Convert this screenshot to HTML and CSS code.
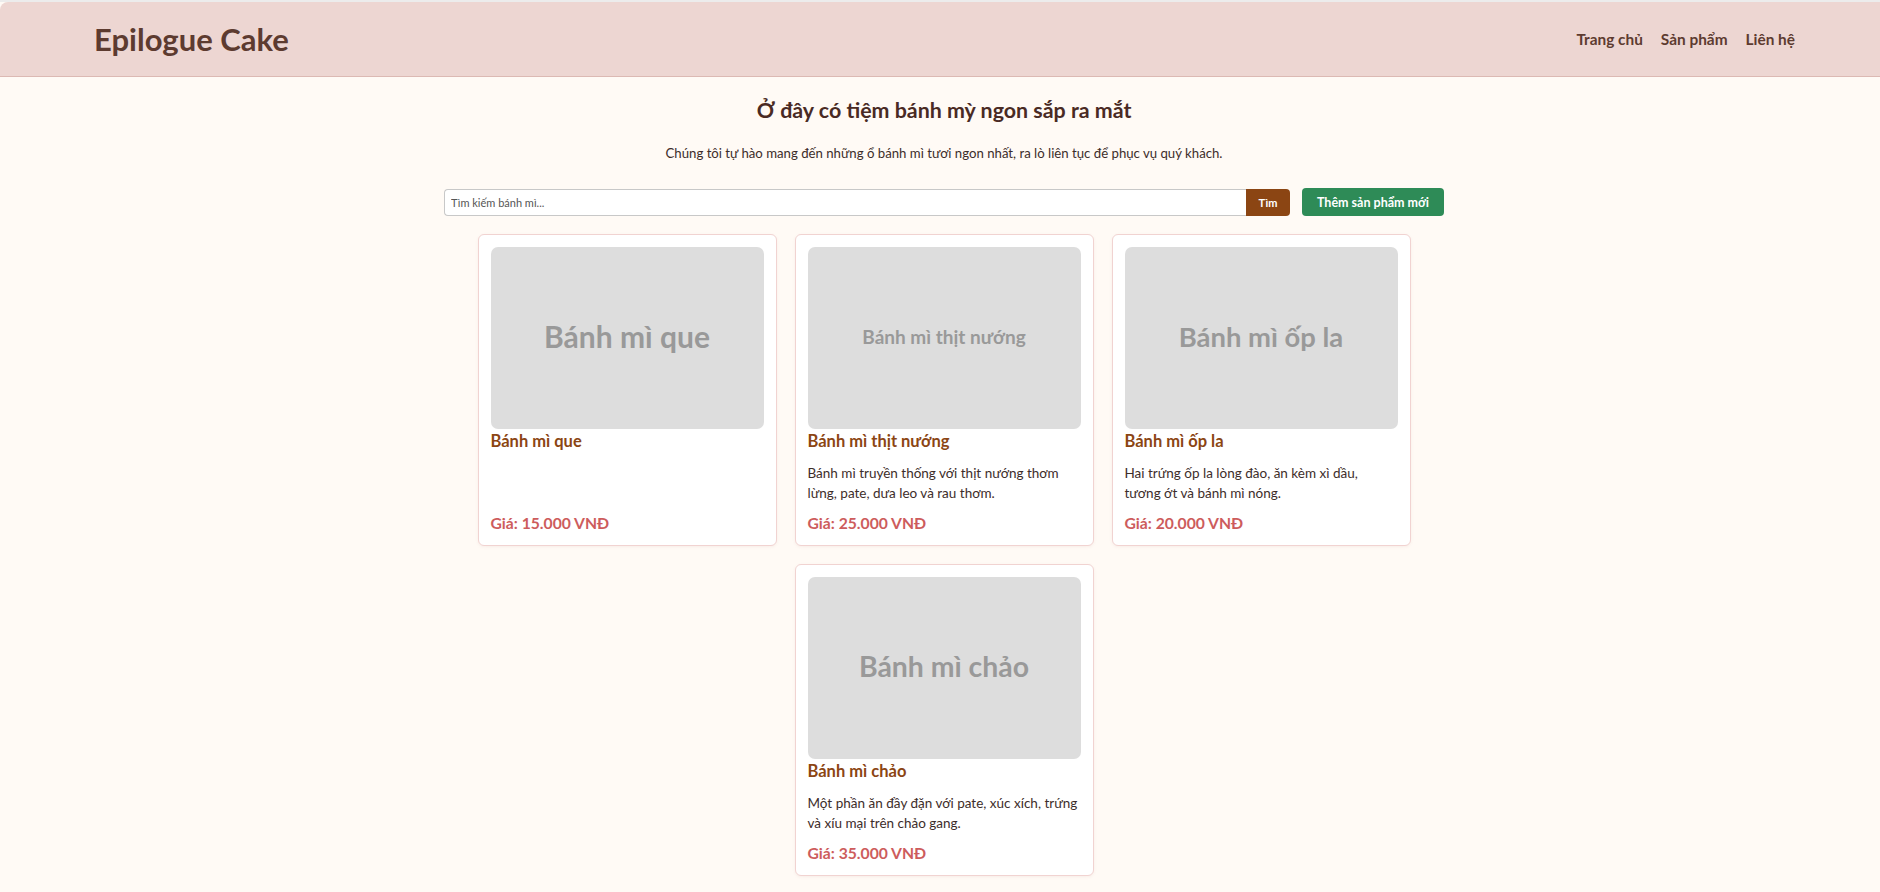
FILE: index.html
```html
<!DOCTYPE html>
<html lang="vi">
<head>
<meta charset="utf-8">
<title>Epilogue Cake</title>
<link rel="stylesheet" href="styles.css">
</head>
<body>
<header class="site-header">
  <div class="logo">Epilogue Cake</div>
  <nav class="nav">
    <a href="#">Trang chủ</a>
    <a href="#">Sản phẩm</a>
    <a href="#">Liên hệ</a>
  </nav>
</header>
<main class="main">
  <h1 class="headline">Ở đây có tiệm bánh mỳ ngon sắp ra mắt</h1>
  <p class="lead">Chúng tôi tự hào mang đến những ổ bánh mì tươi ngon nhất, ra lò liên tục để phục vụ quý khách.</p>
  <div class="toolbar">
    <div class="search">
      <input class="search-input" type="text" placeholder="Tìm kiếm bánh mì...">
      <button class="search-btn">Tìm</button>
    </div>
    <button class="add-btn">Thêm sản phẩm mới</button>
  </div>
  <div class="products">
    <div class="card">
      <div class="thumb thumb-xl">Bánh mì que</div>
      <h3 class="card-title">Bánh mì que</h3>
      <p class="price">Giá: 15.000 VNĐ</p>
    </div>
    <div class="card">
      <div class="thumb thumb-sm">Bánh mì thịt nướng</div>
      <h3 class="card-title">Bánh mì thịt nướng</h3>
      <p class="desc">Bánh mì truyền thống với thịt nướng thơm lừng, pate, dưa leo và rau thơm.</p>
      <p class="price">Giá: 25.000 VNĐ</p>
    </div>
    <div class="card">
      <div class="thumb thumb-md">Bánh mì ốp la</div>
      <h3 class="card-title">Bánh mì ốp la</h3>
      <p class="desc">Hai trứng ốp la lòng đào, ăn kèm xì dầu, tương&nbsp;ớt và bánh mì nóng.</p>
      <p class="price">Giá: 20.000 VNĐ</p>
    </div>
    <div class="card">
      <div class="thumb thumb-lg">Bánh mì chảo</div>
      <h3 class="card-title">Bánh mì chảo</h3>
      <p class="desc">Một phần ăn đầy đặn với pate, xúc xích, trứng và xíu mại trên chảo gang.</p>
      <p class="price">Giá: 35.000 VNĐ</p>
    </div>
  </div>
</main>
</body>
</html>
```

FILE: styles.css
```css
* { box-sizing: border-box; }

html, body {
  margin: 0;
  padding: 0;
}

body {
  background: #fffaf5;
  border-top: 2px solid #ececec;
  font-family: Lato, "Noto Sans", sans-serif;
  color: #3a2a28;
}

.site-header {
  height: 75px;
  background: #edd6d2;
  border-bottom: 1px solid #dcb9b3;
  border-top-left-radius: 8px;
  display: flex;
  align-items: center;
  justify-content: space-between;
  padding: 0 85px 0 94px;
}

.logo {
  font-size: 31px;
  font-weight: 700;
  color: #5d3b30;
}

.nav {
  display: flex;
  gap: 18px;
}

.nav a {
  font-size: 15.4px;
  font-weight: 700;
  color: #5d3b30;
  text-decoration: none;
}

.main {
  padding-left: 8px;
  display: flex;
  flex-direction: column;
  align-items: center;
}

.headline {
  margin: 19px 0 0;
  font-size: 21.4px;
  line-height: 28px;
  font-weight: 700;
  color: #4a2a24;
}

.lead {
  margin: 20px 0 0;
  font-size: 13.2px;
  line-height: 18px;
  color: #3d2d2a;
}

.toolbar {
  margin-top: 26px;
  width: 1000px;
  display: flex;
  align-items: center;
  gap: 12px;
}

.search {
  flex: 1;
  display: flex;
  height: 27px;
}

.search-input {
  flex: 1;
  height: 27px;
  border: 1px solid #c8c8c8;
  border-right: none;
  border-radius: 4px 0 0 4px;
  padding: 0 6px;
  font-family: Lato, "Noto Sans", sans-serif;
  font-size: 11px;
  background: #fff;
  outline: none;
}

.search-input::placeholder {
  color: #555;
}

.search-btn {
  width: 44px;
  height: 27px;
  border: none;
  border-radius: 0 4px 4px 0;
  background: #8b4513;
  color: #fff;
  font-family: Lato, "Noto Sans", sans-serif;
  font-size: 11px;
  font-weight: 700;
  padding: 0;
}

.add-btn {
  width: 142px;
  height: 28px;
  border: none;
  border-radius: 4px;
  background: #2e8b57;
  color: #fff;
  font-family: Lato, "Noto Sans", sans-serif;
  font-size: 12.5px;
  font-weight: 700;
  padding: 0;
}

.products {
  margin-top: 18px;
  width: 940px;
  display: flex;
  flex-wrap: wrap;
  justify-content: center;
  gap: 18px;
  padding-bottom: 20px;
}

.card {
  width: 299px;
  height: 312px;
  background: #fff;
  border: 1px solid #f1d3d1;
  border-radius: 6px;
  box-shadow: 0 1px 3px rgba(200, 150, 150, 0.12);
  padding: 12px;
  display: flex;
  flex-direction: column;
}

.thumb {
  height: 182px;
  padding-bottom: 4px;
  background: #dddddd;
  border-radius: 7px;
  display: flex;
  align-items: center;
  justify-content: center;
  font-size: 28px;
  font-weight: 700;
  color: #999;
}

.thumb-xl { font-size: 30px; }
.thumb-lg { font-size: 28.4px; }
.thumb-md { font-size: 27.4px; }
.thumb-sm { font-size: 19px; }

.card-title {
  margin: 2px 0 0;
  font-size: 16.5px;
  line-height: 20px;
  font-weight: 700;
  color: #8b4513;
}

.desc {
  margin: 12px 0 0;
  font-size: 13.5px;
  line-height: 20px;
  color: #3d2d2a;
}

.price {
  margin: auto 0 0;
  font-size: 15.7px;
  line-height: 20px;
  font-weight: 700;
  color: #cd5c5c;
}
```
